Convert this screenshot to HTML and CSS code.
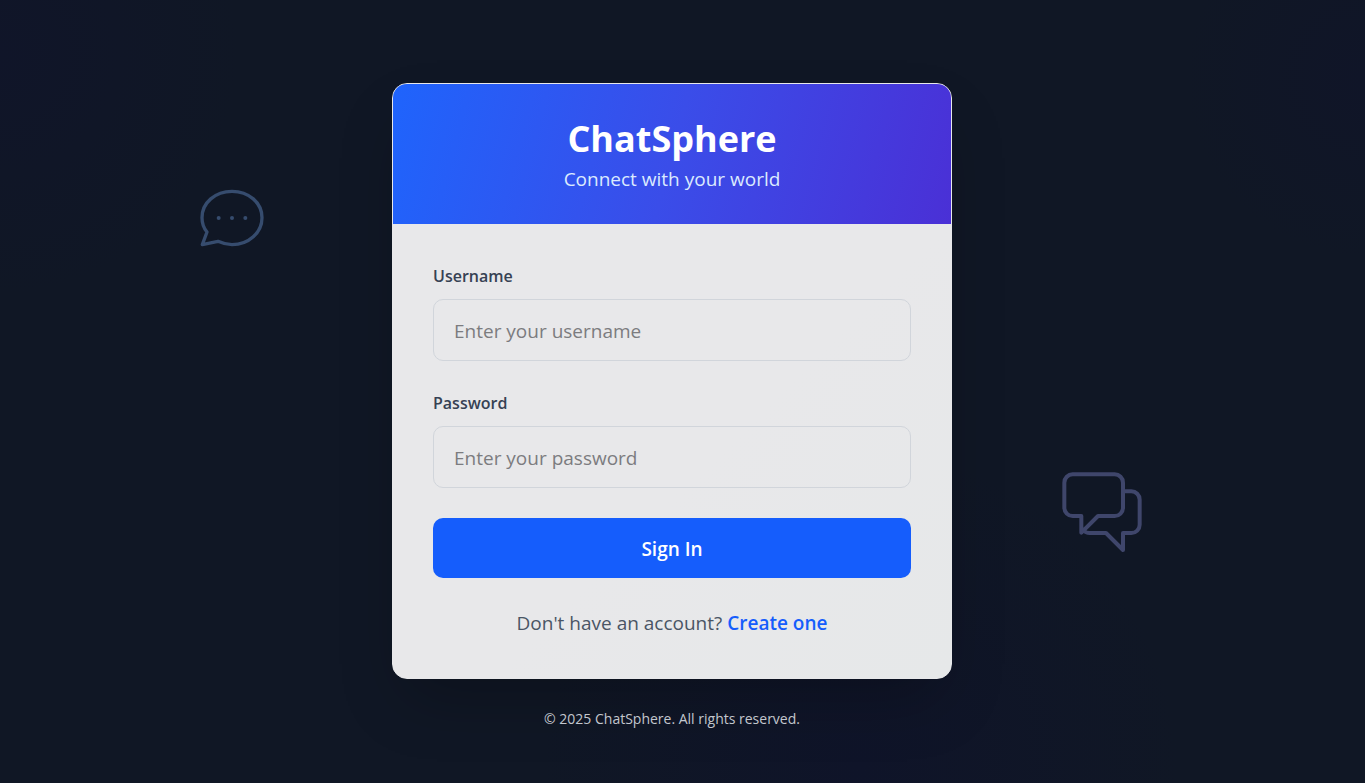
FILE: index.html
```html
<!DOCTYPE html>
<html lang="en">
<head>
<meta charset="utf-8">
<meta name="viewport" content="width=device-width, initial-scale=1">
<title>ChatSphere</title>
<link rel="stylesheet" href="styles.css">
</head>
<body>
<div class="page">
  <svg class="bubble bubble-left" viewBox="30 27 192 174" fill="none" stroke="currentColor" stroke-width="10" stroke-linecap="round" stroke-linejoin="round" aria-hidden="true">
    <path d="M51 156C41 144 36 129 36 113C36 68 76 34 126 34S216 68 216 113S176 194 126 194C111 194 97 190 84 184L37 194Z"/>
    <g fill="currentColor" stroke="none"><circle cx="86" cy="114" r="6"/><circle cx="126" cy="114" r="6"/><circle cx="166" cy="114" r="6"/></g>
  </svg>
  <svg class="bubble bubble-right" viewBox="36 36 240 240" fill="none" stroke="currentColor" stroke-width="12" stroke-linecap="round" stroke-linejoin="round" aria-hidden="true">
    <path d="M68 43H194A25 25 0 0 1 219 68V143A25 25 0 0 1 194 168H144L94 218V168H68A25 25 0 0 1 43 143V68A25 25 0 0 1 68 43Z"/>
    <path d="M219 94H244A25 25 0 0 1 269 119V194A25 25 0 0 1 244 219H219V270L168 219H119Q107 219 101 211"/>
  </svg>
  <main class="card">
    <header class="card-header">
      <h1 class="brand">ChatSphere</h1>
      <p class="tagline">Connect with your world</p>
    </header>
    <form class="form">
      <div class="field">
        <label class="label" for="username">Username</label>
        <input class="input" id="username" type="text" placeholder="Enter your username">
      </div>
      <div class="field">
        <label class="label" for="password">Password</label>
        <input class="input" id="password" type="password" placeholder="Enter your password">
      </div>
      <button class="submit" type="submit">Sign In</button>
      <p class="signup">Don't have an account? <a class="link" href="#">Create one</a></p>
    </form>
  </main>
  <footer class="footer">© 2025 ChatSphere. All rights reserved.</footer>
</div>
</body>
</html>
```
FILE: styles.css
```css
* { box-sizing: border-box; }
body {
  margin: 0;
  font-family: "Segoe UI", "Open Sans", "Noto Sans", sans-serif;
  background: #101725;
}
h1, p { margin: 0; }
.page {
  position: relative;
  min-height: 100vh;
  display: flex;
  flex-direction: column;
  align-items: center;
  justify-content: center;
  gap: 30px;
  padding: 29px 21px 0 0;
  overflow: hidden;
  background:
    radial-gradient(circle at 0 7%, #101529 0, transparent 240px),
    radial-gradient(circle at 100% 10%, #101528 0, transparent 180px),
    radial-gradient(circle at 63% 98%, #0f1429 0, transparent 320px),
    #101725;
}
.bubble { position: absolute; }
.bubble-left { left: 200px; top: 189px; width: 64px; height: 58px; color: #364c6e; }
.bubble-right { left: 1062px; top: 472px; width: 80px; height: 80px; color: #3f466b; }
.card {
  width: 100%;
  max-width: 560px;
  border: 1px solid #e8e8ea;
  border-radius: 15px;
  overflow: hidden;
  background: linear-gradient(135deg, #e8e8ea 60%, #e6e8e9);
  box-shadow: 0 30px 60px -15px rgba(0, 0, 0, 0.25);
}
.card-header {
  padding: 30px;
  text-align: center;
  color: #fff;
  background: linear-gradient(105deg, #1f64fc, #3a4de9 50%, #4a30d6);
}
.brand { font-size: 36px; line-height: 50px; font-weight: 700; }
.tagline { font-size: 19px; line-height: 30px; color: #dbeafe; }
.form { display: flex; flex-direction: column; gap: 30px; padding: 40px; }
.field { display: flex; flex-direction: column; gap: 10px; }
.label { font-size: 16px; line-height: 25px; font-weight: 600; color: #364153; }
.input {
  width: 100%;
  height: 62px;
  padding: 2px 20px 0;
  border: 1px solid #d1d5db;
  border-radius: 10px;
  background: transparent;
  font: inherit;
  font-size: 19px;
  color: #1e2939;
}
.input::placeholder { color: #7c7c7f; opacity: 1; }
.submit {
  height: 60px;
  padding: 2px 20px 0;
  border: 0;
  border-radius: 10px;
  background: #155dfc;
  color: #fff;
  font: inherit;
  font-size: 19px;
  font-weight: 600;
}
.signup { font-size: 19px; line-height: 30px; text-align: center; color: #4a5565; }
.link { color: #155dfc; font-weight: 600; text-decoration: none; }
.footer { font-size: 14px; line-height: 20px; color: #c3c7ce; }
```
